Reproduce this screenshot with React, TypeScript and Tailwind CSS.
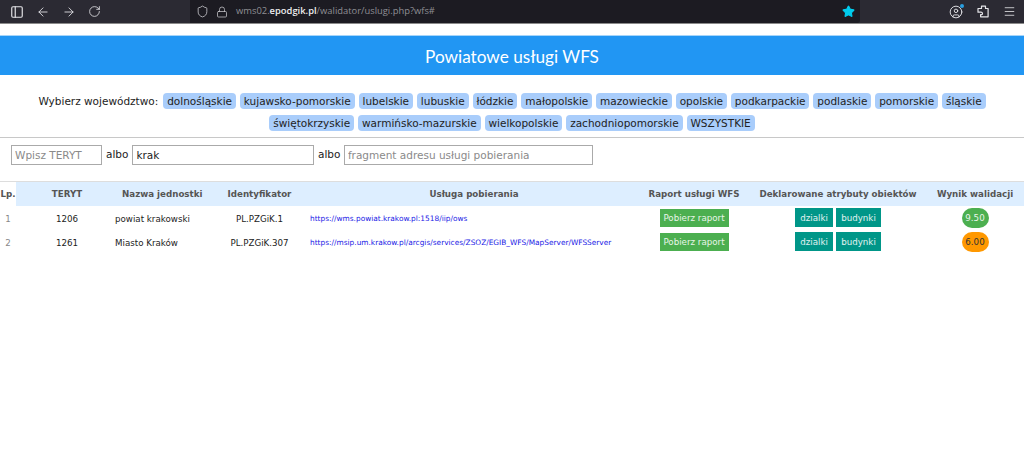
import { ArrowLeft, ArrowRight, RotateCw, Shield, Lock, Star, CircleUser, Menu, PanelLeft } from "lucide-react";

const regions = ["dolnośląskie","kujawsko-pomorskie","lubelskie","lubuskie","łódzkie","małopolskie","mazowieckie","opolskie","podkarpackie","podlaskie","pomorskie","śląskie","świętokrzyskie","warmińsko-mazurskie","wielkopolskie","zachodniopomorskie","WSZYSTKIE"];

const rows = [
  { n: 1, t: "1206", name: "powiat krakowski", id: "PL.PZGiK.1", url: "https://wms.powiat.krakow.pl:1518/iip/ows", score: "9.50", color: "bg-[#4caf50] text-[#e8f5e9]" },
  { n: 2, t: "1261", name: "Miasto Kraków", id: "PL.PZGiK.307", url: "https://msip.um.krakow.pl/arcgis/services/ZSOZ/EGIB_WFS/MapServer/WFSServer", score: "6.00", color: "bg-[#ff9800] text-[#333]" },
];

export default function App() {
  return (
    <div className="min-h-[475px] bg-white font-['DejaVu_Sans',sans-serif] text-[#222]">
      <div className="h-[24px] bg-[#2b2a33] border-b border-[#8a8a8a] flex items-center text-[#e4e4e8]">
        <div className="w-[190px] flex items-center pl-[10px] gap-[12px]">
          <PanelLeft size={14} strokeWidth={2} />
          <ArrowLeft size={14} strokeWidth={1.5} />
          <ArrowRight size={14} strokeWidth={1.5} />
          <RotateCw size={13} strokeWidth={1.5} />
        </div>
        <div className="w-[670px] h-[23px] bg-[#1c1b22] rounded-br-[3px] flex items-center pl-[6px] font-['Open_Sans',sans-serif] text-[9.4px] text-[#8f8f94]">
          <Shield size={13} strokeWidth={1.5} className="text-[#c8c8cc]" />
          <Lock size={12} strokeWidth={1.5} className="ml-[7px] text-[#c8c8cc]" />
          <span className="ml-[8px]">wms02.<span className="text-[#eeeeee] font-semibold">epodgik.pl</span>/walidator/uslugi.php?wfs#</span>
          <Star size={13} className="ml-auto mr-[5px] text-[#00ccee]" fill="#00ccee" />
        </div>
        <div className="flex-1 flex items-center pl-[89px] gap-[14px]">
          <div className="relative">
            <CircleUser size={14} strokeWidth={1.6} />
            <span className="absolute -top-[1px] -right-[1px] w-[4px] h-[4px] rounded-full bg-[#2a9fe0]" />
          </div>
          <svg width="12" height="13" viewBox="0 0 12 13" fill="none" stroke="currentColor" strokeWidth="1.2" strokeLinejoin="round">
            <path d="M4.5 3.5V1.2h4v2.3h2.6v8.3H3.6V9.6c1.2.2 1.9-.3 1.9-1.2S4.8 7 3.6 7.2H1V3.5z" />
          </svg>
          <Menu size={13} strokeWidth={1.5} />
        </div>
      </div>

      <div className="mt-[11px] h-[40px] bg-[#2196f3] border-t border-[#a6d5fa] flex items-center justify-center pt-[2px] font-['Lato',sans-serif] text-[17.2px] text-white">
        Powiatowe usługi WFS
      </div>

      <div className="mt-[18px] flex flex-wrap justify-center gap-x-[4px] gap-y-[6px] text-[10.5px] leading-[16px]">
        <span className="mr-[1px]">Wybierz województwo:</span>
        {regions.map((r) => (
          <span key={r} className="bg-[#a9cdfb] rounded-[4px] px-[3.9px] text-[#222]">{r}</span>
        ))}
      </div>

      <div className="mt-[6px] border-t border-[#c8c8c8]" />

      <div className="mt-[7px] pl-[11px] flex items-center text-[10.5px]">
        <input readOnly placeholder="Wpisz TERYT" className="w-[91px] h-[20px] border border-[#aaa] px-[3px] placeholder:text-[#8a8a8a] outline-none" />
        <span className="mx-[4px]">albo</span>
        <input readOnly value="krak" className="w-[182px] h-[20px] border border-[#aaa] px-[3px] outline-none" />
        <span className="mx-[3.5px]">albo</span>
        <input readOnly placeholder="fragment adresu usługi pobierania" className="w-[249px] h-[20px] border border-[#aaa] px-[3px] placeholder:text-[#8a8a8a] outline-none" />
      </div>

      <table className="mt-[16px] w-full table-fixed border-collapse border-t border-[#ddd] text-[8.7px] leading-[12px]">
        <colgroup>
          <col className="w-[16px]" />
          <col className="w-[98px]" />
          <col className="w-[97px]" />
          <col className="w-[97px]" />
          <col className="w-[330px]" />
          <col className="w-[112px]" />
          <col className="w-[176px]" />
          <col className="w-[98px]" />
        </colgroup>
        <thead>
          <tr className="h-[24px] text-[#555] font-bold">
            <th className="font-bold pt-[1px]">Lp.</th>
            <th className="bg-[#ddeeff] pl-[4px] pt-[1px] font-bold">TERYT</th>
            <th className="bg-[#ddeeff] text-left pl-[8px] pt-[1px] font-bold whitespace-nowrap">Nazwa jednostki</th>
            <th className="bg-[#ddeeff] pt-[1px] font-bold whitespace-nowrap">Identyfikator</th>
            <th className="bg-[#ddeeff] pl-[2px] pt-[1px] font-bold">Usługa pobierania</th>
            <th className="bg-[#ddeeff] pt-[1px] font-bold">Raport usługi WFS</th>
            <th className="bg-[#ddeeff] pt-[1px] font-bold">Deklarowane atrybuty obiektów</th>
            <th className="bg-[#ddeeff] pt-[1px] font-bold">Wynik walidacji</th>
          </tr>
        </thead>
        <tbody>
          {rows.map((r) => (
            <tr key={r.n} className="h-[24px]">
              <td className="text-center text-[#888] pt-[2px]">{r.n}</td>
              <td className="text-center pl-[4px] pt-[2px]">{r.t}</td>
              <td className="pl-[1px] pt-[2px] whitespace-nowrap">{r.name}</td>
              <td className="text-center pt-[2px] whitespace-nowrap">{r.id}</td>
              <td className="pl-[2px] text-[7.4px] pt-[2px] text-[#1a1ae6] whitespace-nowrap">{r.url}</td>
              <td>
                <div className="flex justify-center">
                  <span className="w-[69px] h-[18px] bg-[#4caf50] text-[#e8f5e9] flex items-center justify-center">Pobierz raport</span>
                </div>
              </td>
              <td>
                <div className="flex justify-center gap-[3px]">
                  <span className="w-[38px] h-[19px] bg-[#009688] text-[#e0f2f1] flex items-center justify-center">dzialki</span>
                  <span className="w-[45px] h-[19px] bg-[#009688] text-[#e0f2f1] flex items-center justify-center">budynki</span>
                </div>
              </td>
              <td>
                <div className="flex justify-center">
                  <span className={`w-[27px] h-[20px] rounded-full flex items-center justify-center ${r.color}`}>{r.score}</span>
                </div>
              </td>
            </tr>
          ))}
        </tbody>
      </table>
    </div>
  );
}
